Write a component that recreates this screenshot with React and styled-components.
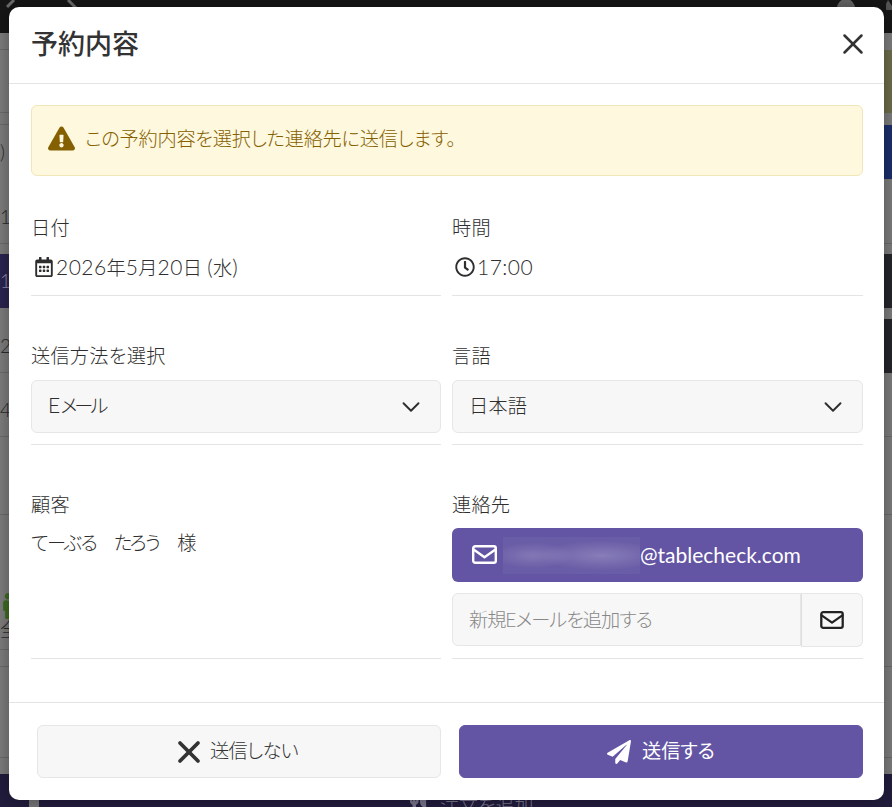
import React from "react";
import styled, { createGlobalStyle } from "styled-components";
import { FaExclamationTriangle, FaRegCalendarAlt, FaRegClock, FaPaperPlane, FaUtensils, FaMale } from "react-icons/fa";
import { ChevronDown, X } from "lucide-react";

const Global = createGlobalStyle`
  html, body { margin: 0; padding: 0; background: #7c7c7c; }
  * { box-sizing: border-box; }
  body {
    font-family: Lato, "Noto Sans CJK JP", sans-serif;
    font-feature-settings: "palt";
    font-weight: 300;
  }
`;

const Page = styled.div`
  position: relative;
  width: 892px;
  height: 807px;
  overflow: hidden;
`;

const Backdrop = styled.div`
  display: flex;
  flex-direction: column;
  height: 807px;
`;

const TopBar = styled.div`
  height: 33px;
  background: #161616;
  flex: none;
`;

const Row = styled.div`
  display: flex;
  justify-content: space-between;
  height: ${(p) => p.$h}px;
  flex: none;
`;

const Cell = styled.div`
  width: 12px;
  background: ${(p) => p.$bg || "#7c7c7c"};
  border-bottom: ${(p) => (p.$line ? "1px solid #6a6a6a" : "none")};
  color: ${(p) => p.$fg || "#2a2a2a"};
  font-size: 19px;
  display: flex;
  flex-direction: column;
  align-items: flex-end;
  justify-content: center;
  overflow: hidden;
  white-space: nowrap;
`;

const RightCell = styled(Cell)`
  width: 9px;
`;

const Clip = styled.span`
  display: block;
  width: 9px;
  margin-right: 3px;
  text-align: left;
  line-height: 22px;
`;

const BottomBar = styled.div`
  flex: 1;
  background: #221c3d;
  display: flex;
  align-items: flex-start;
  padding: 21px 0 0 29px;
  color: #77748a;
  font-size: 19px;
  line-height: 22px;
  overflow: hidden;
`;

const BottomTab = styled.span`
  width: 10px;
  height: 12px;
  background: #757575;
  margin-right: 369px;
`;

const BottomLabel = styled.span`
  margin-left: 12px;
`;

const Modal = styled.div`
  position: absolute;
  left: 9px;
  top: 7px;
  width: 875px;
  height: 793px;
  background: #fff;
  border-radius: 10px;
  box-shadow: 0 0 16px rgba(0, 0, 0, 0.35);
  display: flex;
  flex-direction: column;
  color: #2e2e2e;
`;

const Header = styled.header`
  height: 77px;
  flex: none;
  display: flex;
  align-items: center;
  justify-content: space-between;
  padding: 0 14px 2px 22px;
  border-bottom: 1px solid #e4e4e4;
`;

const Title = styled.h1`
  margin: 0 0 4px;
  font-size: 27px;
  font-weight: 500;
  color: #333;
`;

const CloseButton = styled.button`
  border: 0;
  background: none;
  padding: 0;
  display: flex;
  color: #333;
`;

const Body = styled.main`
  flex: 1;
  padding: 21px 21px 0 22px;
`;

const Alert = styled.div`
  height: 71px;
  display: flex;
  align-items: center;
  gap: 10px;
  padding: 0 17px 5px 16px;
  background: #fef8df;
  border: 1px solid #f0e6b8;
  border-radius: 6px;
  color: #856000;
  font-size: 19.2px;
  letter-spacing: -0.25px;
  svg { flex: none; }
`;

const Grid = styled.div`
  display: grid;
  grid-template-columns: 410px 411px;
  column-gap: 11px;
  row-gap: 45px;
  margin-top: 37px;
`;

const Field = styled.div`
  display: flex;
  flex-direction: column;
  padding-bottom: 11px;
  border-bottom: 1px solid #e4e4e4;
`;

const Label = styled.label`
  font-size: 19.2px;
  line-height: 29px;
  letter-spacing: 0.25px;
  margin-bottom: ${(p) => p.$gap || 9}px;
  color: #2e2e2e;
`;

const Value = styled.div`
  display: flex;
  align-items: center;
  gap: 2px;
  font-size: 19.2px;
  line-height: 29px;
  height: 33px;
  padding-bottom: 2px;
  color: #2e2e2e;
  white-space: pre;
  padding-left: ${(p) => p.$pad || 0}px;
  svg { flex: none; }
`;

const GuestName = styled(Value)`
  letter-spacing: -1.5px;
  padding-bottom: 5px;
`;

const Latin = styled.span`
  font-size: 21px;
  letter-spacing: 0.45px;
`;

const Select = styled.div`
  height: 53px;
  display: flex;
  align-items: center;
  justify-content: space-between;
  padding: 0 14px 0 16px;
  background: #f7f7f7;
  border: 1px solid #e6e6e6;
  border-radius: 6px;
  font-size: 19.2px;
  color: #2e2e2e;
`;

const SelectText = styled.span`
  margin-bottom: 3px;
  letter-spacing: ${(p) => (p.$tight ? "-3px" : "0.2px")};
`;

const ContactButton = styled.div`
  height: 54px;
  display: flex;
  align-items: center;
  padding: 0 0 2px 20px;
  background: #6355a3;
  border-radius: 6px;
  color: #fff;
  font-size: 21px;
  font-weight: 400;
`;

const Blur = styled.span`
  display: block;
  width: 137px;
  height: 37px;
  margin: 2px 0 0 6px;
  background:
    radial-gradient(ellipse 45% 40% at 72% 50%, rgba(255, 255, 255, 0.2), transparent),
    radial-gradient(ellipse 30% 35% at 22% 50%, rgba(255, 255, 255, 0.17), transparent),
    #6a5da7;
`;

const InputGroup = styled.div`
  display: flex;
  height: 54px;
  margin-top: 11px;
`;

const Input = styled.div`
  flex: 1;
  height: 53px;
  display: flex;
  align-items: center;
  padding: 0 0 2px 16px;
  background: #f7f7f7;
  border: 1px solid #e6e6e6;
  border-radius: 6px 0 0 6px;
  font-size: 19.2px;
  letter-spacing: -1px;
  color: #888;
`;

const InputAddon = styled.div`
  width: 62px;
  display: flex;
  align-items: center;
  justify-content: center;
  background: #f7f7f7;
  border: 1px solid #e6e6e6;
  border-left: 1px solid #dedede;
  border-radius: 0 6px 6px 0;
`;

const Footer = styled.footer`
  height: 98px;
  flex: none;
  display: grid;
  grid-template-columns: 404px 404px;
  column-gap: 18px;
  padding: 22px 0 0 28px;
  border-top: 1px solid #e4e4e4;
`;

const ActionButton = styled.button`
  height: 53px;
  display: flex;
  align-items: center;
  justify-content: center;
  gap: ${(p) => (p.$primary ? 11 : 3)}px;
  border: 1px solid ${(p) => (p.$primary ? "#6355a3" : "#e6e6e6")};
  border-radius: 6px;
  background: ${(p) => (p.$primary ? "#6355a3" : "#f7f7f7")};
  color: ${(p) => (p.$primary ? "#fff" : "#333")};
  font-family: inherit;
  font-feature-settings: inherit;
  font-weight: ${(p) => (p.$primary ? 400 : 300)};
  font-size: 19.2px;
  letter-spacing: ${(p) => (p.$primary ? "0" : "-0.7px")};
  padding: 0;
`;

const CancelIcon = styled(X)`
  margin-left: -9px;
`;

const ButtonText = styled.span`
  margin-bottom: 3px;
`;

const Envelope = ({ color, w = 25, h = 19 }) => (
  <svg width={w} height={h} viewBox="0 0 25 19" fill="none" stroke={color} strokeWidth="2.4" strokeLinejoin="round" strokeLinecap="round">
    <rect x="1.2" y="1.2" width="22.6" height="16.6" rx="2" />
    <path d="M1.6 4.6 12.5 12.2 23.4 4.6" />
  </svg>
);

const TopArt = () => (
  <svg width="892" height="33" viewBox="0 0 892 33">
    <path d="M14 0 7 7" stroke="#6d6d6d" strokeWidth="3" fill="none" />
    <path d="M68 0 76 8" stroke="#6d6d6d" strokeWidth="3" fill="none" />
    <circle cx="846" cy="8" r="9" fill="#666" />
    <path d="M888 0 892 6V10H886V4Z" fill="#555" />
  </svg>
);

const PURPLE = "#2a2450";
const DARK = "#25262a";

const rows = [
  { h: 17, lLine: true },
  { h: 63, lLine: true, r: "#6c6c4c" },
  { h: 12, lLine: true },
  { h: 54, text: ")", r: "#1c2f6c" },
  { h: 12 },
  { h: 53, text: "11", lLine: true, rLine: true },
  { h: 10 },
  { h: 54, text: "11", l: PURPLE, fg: "#8f8ba8", r: DARK },
  { h: 11 },
  { h: 54, text: "21", r: DARK, lLine: true },
  { h: 11 },
  { h: 53, text: "41", lLine: true, rLine: true },
  { h: 78, lLine: true, rLine: true },
  { h: 70 },
  { h: 65, icon: true, lLine: true },
  { h: 17, lLine: true, rLine: true },
  { h: 91, lLine: true, rLine: true },
  { h: 16 },
];

export default function App() {
  return (
    <Page>
      <Global />
      <Backdrop>
        <TopBar><TopArt /></TopBar>
        {rows.map((r, i) => (
          <Row key={i} $h={r.h}>
            <Cell $bg={r.l} $fg={r.fg} $line={r.lLine}>
              {r.icon && <FaMale size={26} color="#3f6b22" style={{ marginRight: -9 }} />}
              {r.icon && <Clip>全</Clip>}
              {r.text && <Clip>{r.text}</Clip>}
            </Cell>
            <RightCell $bg={r.r} $line={r.rLine} />
          </Row>
        ))}
        <BottomBar>
          <BottomTab />
          <FaUtensils size={20} />
          <BottomLabel>注文を追加</BottomLabel>
        </BottomBar>
      </Backdrop>

      <Modal>
        <Header>
          <Title>予約内容</Title>
          <CloseButton aria-label="close"><X size={34} strokeWidth={1.8} /></CloseButton>
        </Header>
        <Body>
          <Alert>
            <FaExclamationTriangle size={27} color="#856000" />
            <span>この予約内容を選択した連絡先に送信します。</span>
          </Alert>
          <Grid>
            <Field>
              <Label>日付</Label>
              <Value $pad={3}><FaRegCalendarAlt size={20} /><span><Latin>2026</Latin>年<Latin>5</Latin>月<Latin>20</Latin>日 <Latin>(</Latin>水<Latin>)</Latin></span></Value>
            </Field>
            <Field>
              <Label>時間</Label>
              <Value $pad={3}><FaRegClock size={20} /><Latin>17:00</Latin></Value>
            </Field>
            <Field>
              <Label $gap={10}>送信方法を選択</Label>
              <Select><SelectText $tight><Latin>E</Latin>メール</SelectText><ChevronDown size={30} strokeWidth={1.5} /></Select>
            </Field>
            <Field>
              <Label $gap={10}>言語</Label>
              <Select><SelectText>日本語</SelectText><ChevronDown size={30} strokeWidth={1.5} /></Select>
            </Field>
            <Field>
              <Label>顧客</Label>
              <GuestName>てーぶる　たろう　様</GuestName>
            </Field>
            <Field>
              <Label>連絡先</Label>
              <ContactButton>
                <Envelope color="#fff" />
                <Blur />
                @tablecheck.com
              </ContactButton>
              <InputGroup>
                <Input>新規Eメールを追加する</Input>
                <InputAddon><Envelope color="#222" w={24} h={18} /></InputAddon>
              </InputGroup>
            </Field>
          </Grid>
        </Body>
        <Footer>
          <ActionButton>
            <CancelIcon size={36} strokeWidth={2.5} />
            <ButtonText>送信しない</ButtonText>
          </ActionButton>
          <ActionButton $primary>
            <FaPaperPlane size={24} />
            <ButtonText>送信する</ButtonText>
          </ActionButton>
        </Footer>
      </Modal>
    </Page>
  );
}
